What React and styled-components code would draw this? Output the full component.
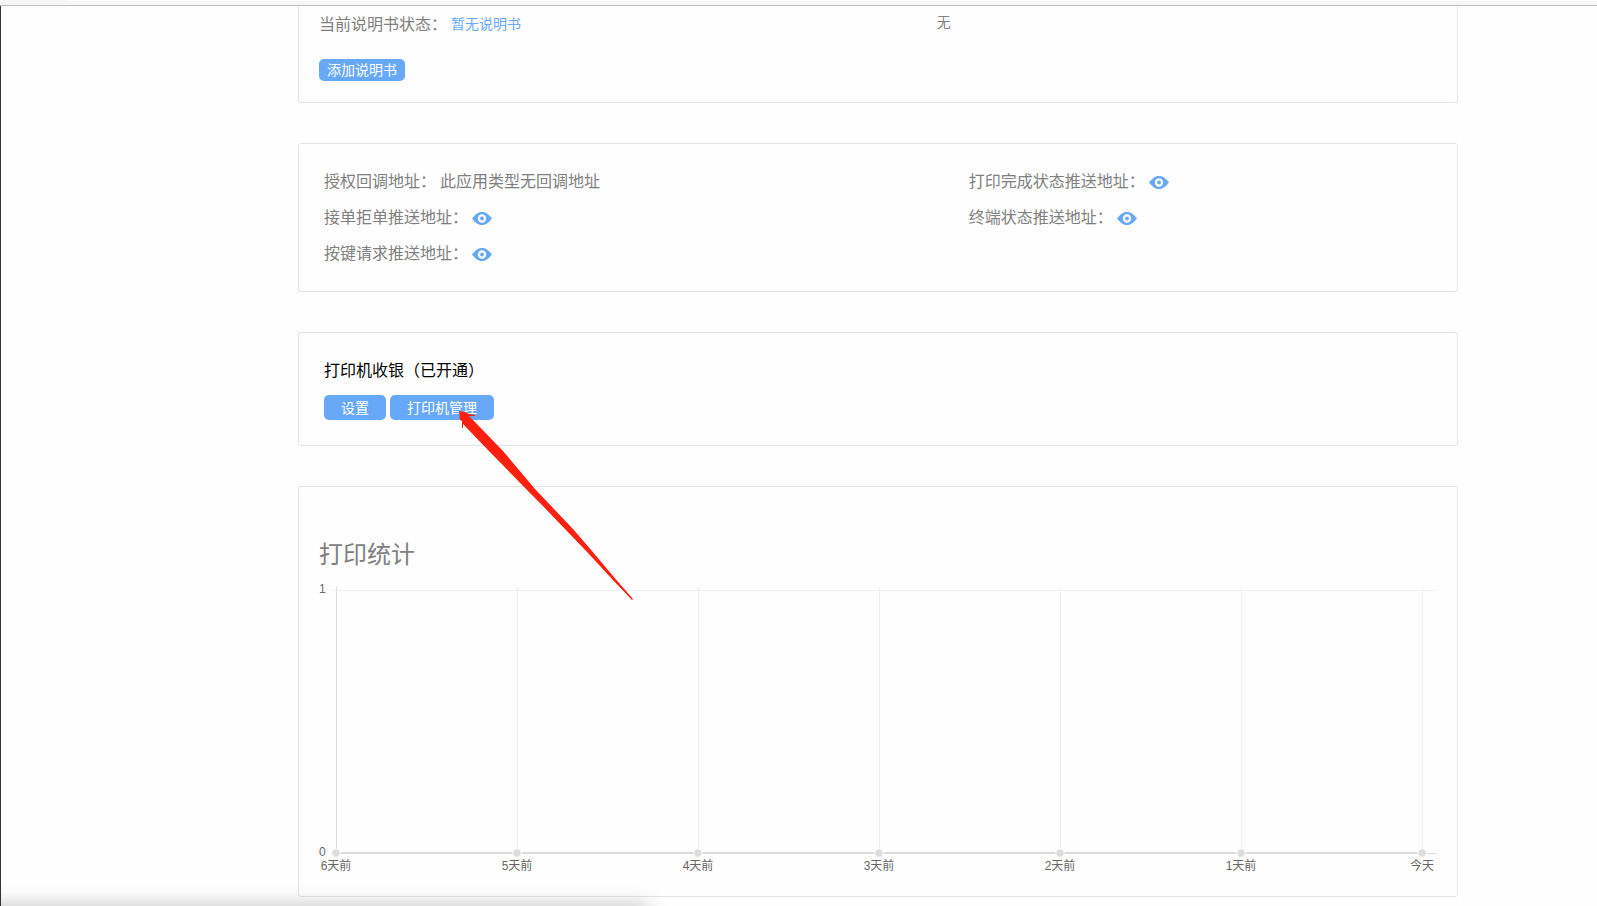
import React from 'react'
import styled, { createGlobalStyle } from 'styled-components'

const GlobalStyle = createGlobalStyle`
  body {
    margin: 0;
    background-color: #fefefe;
    color: #808080;
    font-family: 'Noto Sans CJK SC', sans-serif;
    font-size: 16px;
    overflow: hidden;
  }
`
const Page = styled.div`
  position: relative;
  display: flex;
  flex-direction: column;
  min-height: 100vh;
`
const TopBar = styled.div`
  height: 5px;
  display: flex;
  background-color: #f7f7f7;
  border-bottom: 1px solid #bdbdbd;
`
const AddressBar = styled.div`
  flex: 1;
  height: 1px;
  margin-left: 69px;
  background-color: #fefefe;
`
const Body = styled.div`
  flex: 1;
  display: flex;
  border-left: 1px solid #353535;
`
const Sidebar = styled.aside`
  flex: 0 0 158px;
`
const Main = styled.main`
  flex: 1;
  max-width: 1160px;
  margin: 0 auto;
  display: flex;
  flex-direction: column;
  gap: 40px;
`
const Card = styled.section`
  border: 1px solid #e4e4e4;
  border-radius: 3px;
  padding: ${props => props.$padding || '24px 25px 25px'};
`
const ManualCard = styled(Card)`
  border-top: none;
  border-radius: 0 0 3px 3px;
`
const Columns = styled.div`
  display: grid;
  grid-template-columns: ${props => props.$columns};
`
const Column = styled.div`
  display: flex;
  flex-direction: column;
  gap: 12px;
`
const Row = styled.div`
  display: flex;
  align-items: center;
  gap: 4px;
  line-height: 24px;
`
const ManualRow = styled(Row)`
  height: 34px;
`
const SmallText = styled.div`
  font-size: 14px;
  line-height: 30px;
`
const TextLink = styled.a`
  color: #67a9f8;
  font-size: 14px;
  text-decoration: none;
`
const Button = styled.button`
  border: none;
  border-radius: 5px;
  height: ${props => (props.$small ? 22 : 25)}px;
  padding: 0 ${props => (props.$small ? 8 : 17)}px 2px;
  background-color: #67a9f8;
  color: white;
  font-family: inherit;
  font-size: 14px;
  line-height: 20px;
  cursor: pointer;
`
const Buttons = styled.div`
  display: flex;
  gap: 4px;
  margin-top: ${props => props.$top}px;
`
const EyeButton = styled.button`
  display: flex;
  border: none;
  padding: 4px 0 0;
  background: none;
  color: #67a9f8;
  cursor: pointer;
`
const CardTitle = styled.h2`
  margin: 0;
  color: black;
  font-size: 16px;
  font-weight: normal;
  line-height: 25px;
`
const ChartTitle = styled.h2`
  margin: 28px 0 9px;
  font-size: 24px;
  font-weight: normal;
  line-height: 36px;
`
const ChartSvg = styled.svg`
  display: block;
  width: 100%;
  font-family: 'Liberation Sans', 'Noto Sans CJK SC', sans-serif;
  font-size: 12px;
  fill: #666;
`
const StatusShadow = styled.div`
  position: fixed;
  top: 100%;
  left: -20px;
  width: 668px;
  height: 20px;
  box-shadow: 0 0 20px rgba(0, 0, 0, 0.25);
`
const Arrow = styled.svg`
  position: absolute;
  top: 406px;
  left: 455px;
  pointer-events: none;
`

const Eye = ({ label }) => (
  <EyeButton aria-label={label}>
    <svg width="20" height="13" viewBox="0 0 20 13" fill="currentColor">
      <path
        fillRule="evenodd"
        d="M0 6.500C2 4 4 2 5.500 1.200 7 .3 8 0 10 0s3 .3 4.500 1.200C16 2 18 4 20 6.500c-2 2.500-4 4.500-5.500 5.300C13 12.700 12 13 10 13s-3-.3-4.500-1.200C4 11 2 9 0 6.500zm10-4.200a4.200 4.200 0 1 0 0 8.400 4.200 4.200 0 0 0 0-8.400z"
      />
      <circle cx="10" cy="6.5" r="1.9" />
    </svg>
  </EyeButton>
)

const Address = ({ label, children }) => (
  <Row>
    <span>{label}：</span>
    {children || <Eye label={label} />}
  </Row>
)

const days = ['6天前', '5天前', '4天前', '3天前', '2天前', '1天前', '今天']
const dayX = index => 17 + index * 181

const Chart = () => (
  <ChartSvg viewBox="0 0 1118 296">
    <g stroke="#f0f0f0">
      <line x1="12" x2="1118" y1="10.5" y2="10.5" />
      <line x1="12" x2="1118" y1="273.5" y2="273.5" stroke="#dcdcdc" />
      {days.map((day, i) => (
        <line
          key={day}
          x1={dayX(i) + 0.5}
          x2={dayX(i) + 0.5}
          y1="7"
          y2="278"
          stroke={i === 0 ? '#dcdcdc' : '#f0f0f0'}
        />
      ))}
    </g>
    <line
      x1={dayX(0)}
      x2={dayX(6)}
      y1="273"
      y2="273"
      stroke="#dcdcdc"
      strokeWidth="2"
    />
    <text x="0" y="13">
      1
    </text>
    <text x="0" y="276">
      0
    </text>
    {days.map((day, i) => (
      <g key={day}>
        <circle
          cx={dayX(i)}
          cy="273"
          r="4.2"
          fill="#dcdcdc"
          stroke="#fefefe"
        />
        <text x={dayX(i)} y="290" textAnchor="middle">
          {day}
        </text>
      </g>
    ))}
  </ChartSvg>
)

const App = () => {
  return (
    <Page>
      <GlobalStyle />
      <TopBar>
        <AddressBar />
      </TopBar>
      <Body>
        <Sidebar />
        <Main>
          <ManualCard $padding="0 20px 21px">
            <Columns $columns="21fr 17fr">
              <ManualRow>
                <span>当前说明书状态：</span>
                <TextLink href="#">暂无说明书</TextLink>
              </ManualRow>
              <SmallText>无</SmallText>
            </Columns>
            <Buttons $top={19}>
              <Button $small>添加说明书</Button>
            </Buttons>
          </ManualCard>
          <Card $padding="24px 25px 27px">
            <Columns $columns="32fr 23fr">
              <Column>
                <Address label="授权回调地址">
                  <span>此应用类型无回调地址</span>
                </Address>
                <Address label="接单拒单推送地址" />
                <Address label="按键请求推送地址" />
              </Column>
              <Column>
                <Address label="打印完成状态推送地址" />
                <Address label="终端状态推送地址" />
              </Column>
            </Columns>
          </Card>
          <Card>
            <CardTitle>打印机收银（已开通）</CardTitle>
            <Buttons $top={13}>
              <Button>设置</Button>
              <Button>打印机管理</Button>
            </Buttons>
          </Card>
          <Card $padding="20px">
            <ChartTitle>打印统计</ChartTitle>
            <Chart />
          </Card>
        </Main>
      </Body>
      <Arrow width="180" height="196" viewBox="455 406 180 196" fill="#ff200f">
        <path d="M459 411L465 412 469 414 475 415V416L469 416 474 421 503 451 535 489 573 529 592 551 613 576 633 599 632 600 612 579 588 553 565 529 540 503 527 490 487 449 463 424V428H462V421L460 420z" />
      </Arrow>
      <StatusShadow />
    </Page>
  )
}

export default App
